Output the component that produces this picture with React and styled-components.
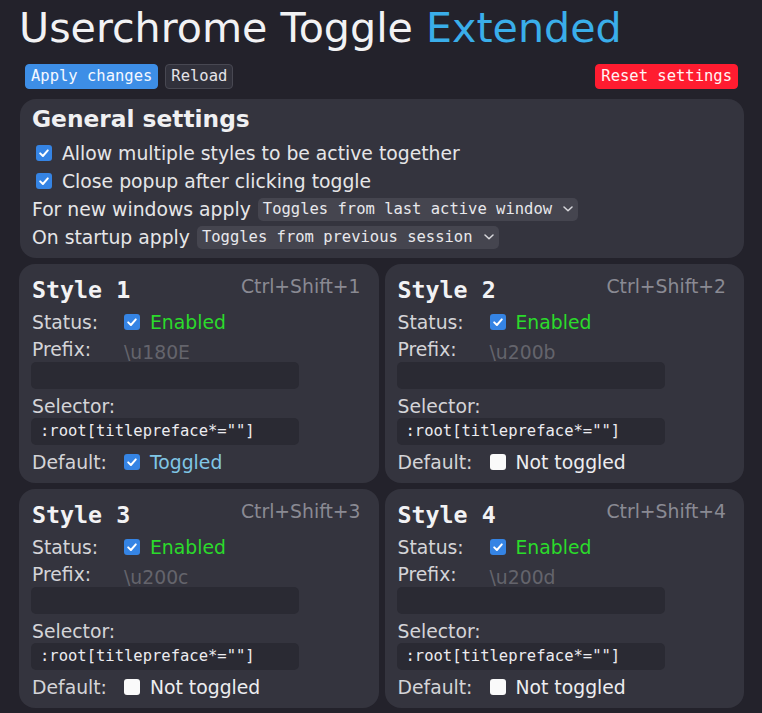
import React from 'react';
import styled, { createGlobalStyle } from 'styled-components';

const GlobalStyle = createGlobalStyle`
  html, body {
    margin: 0;
    padding: 0;
    background: #23222b;
  }
  body {
    font-family: "DejaVu Sans", "Liberation Sans", sans-serif;
    font-size: 18.8px;
    color: #e6e6e8;
  }
`;

const styles = [
  { n: 1, prefix: '\\u180E', toggled: true },
  { n: 2, prefix: '\\u200b', toggled: false },
  { n: 3, prefix: '\\u200c', toggled: false },
  { n: 4, prefix: '\\u200d', toggled: false },
];

function Check({ checked }) {
  return (
    <Box $checked={checked}>
      {checked && (
        <svg width="16" height="16" viewBox="0 0 16 16">
          <path d="M4.2 8.4 L6.9 11 L11.8 5.4" fill="none" stroke="#fff" strokeWidth="2" strokeLinecap="round" strokeLinejoin="round" />
        </svg>
      )}
    </Box>
  );
}

function Chevron() {
  return (
    <svg width="10" height="6" viewBox="0 0 10 6">
      <path d="M1 1 L5 4.8 L9 1" fill="none" stroke="#d8d8dc" strokeWidth="1.5" strokeLinecap="round" strokeLinejoin="round" />
    </svg>
  );
}

function StyleCard({ item }) {
  return (
    <Card>
      <CardHead>
        <CardTitle>Style {item.n}</CardTitle>
        <Hint>Ctrl+Shift+{item.n}</Hint>
      </CardHead>
      <Row>
        <Label>Status:</Label>
        <Check checked />
        <Value $color="#2bdb2b">Enabled</Value>
      </Row>
      <PrefixRow>
        <Label>Prefix:</Label>
        <Placeholder>{item.prefix}</Placeholder>
      </PrefixRow>
      <Field />
      <SelectorLabel>Selector:</SelectorLabel>
      <Field>:root[titlepreface*=""]</Field>
      <DefaultRow>
        <Label>Default:</Label>
        <Check checked={item.toggled} />
        {item.toggled
          ? <Value $color="#80c6e6">Toggled</Value>
          : <Value $color="#ededf0">Not toggled</Value>}
      </DefaultRow>
    </Card>
  );
}

export default function App() {
  return (
    <Page>
      <GlobalStyle />
      <Title>Userchrome Toggle <Accent>Extended</Accent></Title>
      <Toolbar>
        <Button $bg="#3d8ee6" $border="#3d8ee6" $color="#f4f8ff">Apply changes</Button>
        <Button $bg="#31313b" $border="#484852" $color="#e4e4e8">Reload</Button>
        <Spacer />
        <Button $bg="#ff1c30" $border="#ff1c30" $color="#fff4f4">Reset settings</Button>
      </Toolbar>
      <General>
        <GeneralTitle>General settings</GeneralTitle>
        <CheckRow>
          <Check checked />
          <span>Allow multiple styles to be active together</span>
        </CheckRow>
        <CheckRow>
          <Check checked />
          <span>Close popup after clicking toggle</span>
        </CheckRow>
        <SettingRow>
          <span>For new windows apply</span>
          <Select>Toggles from last active window<Chevron /></Select>
        </SettingRow>
        <SettingRow>
          <span>On startup apply</span>
          <Select>Toggles from previous session<Chevron /></Select>
        </SettingRow>
      </General>
      <Grid>
        {styles.map((s) => <StyleCard key={s.n} item={s} />)}
      </Grid>
    </Page>
  );
}

const mono = `"DejaVu Sans Mono", "Liberation Mono", monospace`;

const Page = styled.div`
  padding: 4px 18px 5px 19px;
`;

const Title = styled.h1`
  margin: 0;
  font-size: 41.2px;
  line-height: 49px;
  font-weight: normal;
  color: #f2f2f4;
`;

const Accent = styled.span`
  color: #3aaeea;
`;

const Toolbar = styled.div`
  display: flex;
  align-items: center;
  gap: 7px;
  margin: 11px 6px 10px 6px;
`;

const Spacer = styled.div`
  flex: 1;
`;

const Button = styled.button`
  height: 25px;
  padding: 0 5px;
  border: 1px solid ${(p) => p.$border};
  border-radius: 4px;
  background: ${(p) => p.$bg};
  color: ${(p) => p.$color};
  font-family: ${mono};
  font-size: 15.5px;
  line-height: 23px;
`;

const General = styled.section`
  background: #34343e;
  border-radius: 16px;
  padding: 6px 12px 7px 12px;
  margin-left: 1px;
`;

const GeneralTitle = styled.h2`
  margin: 0 0 6px 0;
  font-size: 23.3px;
  line-height: 28px;
  font-weight: bold;
  color: #f0f0f2;
`;

const CheckRow = styled.div`
  display: flex;
  align-items: center;
  gap: 10px;
  height: 28px;
  padding-left: 4px;
`;

const SettingRow = styled.div`
  display: flex;
  align-items: center;
  gap: 7px;
  height: 28px;
  white-space: nowrap;
`;

const Select = styled.div`
  display: flex;
  align-items: center;
  gap: 11px;
  height: 23px;
  padding: 0 5px 0 5px;
  border-radius: 5px;
  background: #45454f;
  color: #e8e8ec;
  font-family: ${mono};
  font-size: 15.5px;
`;

const Box = styled.span`
  display: inline-flex;
  flex: none;
  width: 16px;
  height: 16px;
  border-radius: 3px;
  background: ${(p) => (p.$checked ? '#3584e4' : '#fafafa')};
`;

const Grid = styled.div`
  display: grid;
  grid-template-columns: 1fr 1fr;
  gap: 6px;
  margin-top: 6px;
`;

const Card = styled.section`
  display: flex;
  flex-direction: column;
  background: #34343e;
  border-radius: 16px;
  padding: 12px 12px 7px 13px;
`;

const CardHead = styled.div`
  display: flex;
  justify-content: space-between;
  align-items: flex-start;
  height: 28px;
  margin-bottom: 4px;
`;

const CardTitle = styled.h3`
  margin: 0;
  font-family: ${mono};
  font-size: 23.3px;
  line-height: 28px;
  font-weight: bold;
  color: #f2f2f4;
`;

const Hint = styled.span`
  line-height: 22px;
  color: #8a8a93;
  margin-right: 6px;
`;

const Row = styled.div`
  display: flex;
  align-items: center;
  height: 28px;
`;

const DefaultRow = styled(Row)`
  margin-top: 3px;
`;

const Label = styled.span`
  width: 92px;
  flex: none;
  color: #d4d4d8;
`;

const Value = styled.span`
  margin-left: 10px;
  color: ${(p) => p.$color};
`;

const PrefixRow = styled.div`
  display: flex;
  align-items: flex-start;
  height: 26px;
  padding-top: 3px;
  box-sizing: border-box;
  line-height: 22px;
`;

const Placeholder = styled.span`
  padding-top: 3px;
  color: #64646c;
`;

const SelectorLabel = styled.div`
  margin-top: 6px;
  line-height: 23px;
  color: #d4d4d8;
`;

const Field = styled.div`
  width: 268px;
  height: 27px;
  margin-left: -1px;
  padding-left: 9px;
  box-sizing: border-box;
  border-radius: 5px;
  background: #2a2a33;
  color: #ececf0;
  font-family: ${mono};
  font-size: 15.5px;
  line-height: 27px;
`;
